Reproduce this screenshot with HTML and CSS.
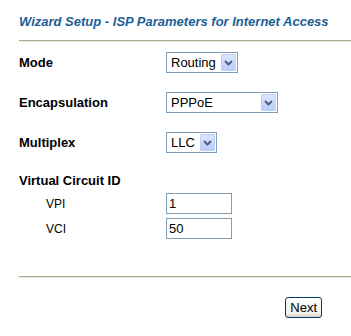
FILE: index.html
```html
<!DOCTYPE html>
<html lang="en">
<head>
    <meta charset="UTF-8">
    <title>Wizard Setup - ISP Parameters for Internet Access</title>
    <link rel="stylesheet" href="styles.css">
</head>
<body>
    <div class="wizard">
        <h1 class="wizard-title">Wizard Setup - ISP Parameters for Internet Access</h1>
        <div class="rule"></div>

        <!-- Connection settings -->
        <div class="field field-first">
            <span class="field-label">Mode</span>
            <span class="select select-mode">
                <span class="select-text">Routing</span>
                <span class="select-btn"><svg width="9" height="6" viewBox="0 0 9 6"><path d="M1 1 L4.5 4.5 L8 1" fill="none" stroke="#4d6185" stroke-width="2"/></svg></span>
            </span>
        </div>
        <div class="field">
            <span class="field-label">Encapsulation</span>
            <span class="select select-encap">
                <span class="select-text">PPPoE</span>
                <span class="select-btn"><svg width="9" height="6" viewBox="0 0 9 6"><path d="M1 1 L4.5 4.5 L8 1" fill="none" stroke="#4d6185" stroke-width="2"/></svg></span>
            </span>
        </div>
        <div class="field">
            <span class="field-label">Multiplex</span>
            <span class="select select-mux">
                <span class="select-text">LLC</span>
                <span class="select-btn"><svg width="9" height="6" viewBox="0 0 9 6"><path d="M1 1 L4.5 4.5 L8 1" fill="none" stroke="#4d6185" stroke-width="2"/></svg></span>
            </span>
        </div>

        <!-- Virtual circuit -->
        <div class="group-label">Virtual Circuit ID</div>
        <div class="sub-field">
            <span class="sub-label">VPI</span>
            <input class="text-input" type="text" value="1">
        </div>
        <div class="sub-field">
            <span class="sub-label">VCI</span>
            <input class="text-input" type="text" value="50">
        </div>

        <div class="rule rule-bottom"></div>
        <div class="actions">
            <button class="btn" type="button">Next</button>
        </div>
    </div>
</body>
</html>
```

FILE: styles.css
```css
body {
    margin: 0;
    background: #fff;
    font-family: "Liberation Sans", Arial, sans-serif;
    color: #000;
}

.wizard {
    padding: 14px 0 0 19px;
}

/* Page heading */
.wizard-title {
    margin: 0;
    font-size: 13px;
    line-height: 16px;
    font-weight: bold;
    font-style: italic;
    color: #1d5f95;
}

/* Separator lines */
.rule {
    margin-top: 10px;
    height: 1px;
    background: #aca899;
    border-bottom: 1px solid #ece9d8;
}

.rule-bottom {
    margin-top: 37px;
}

/* Label + control rows */
.field {
    display: flex;
    align-items: center;
    height: 21px;
    margin-top: 19px;
}

.field-first {
    margin-top: 10px;
}

.field-label {
    width: 147px;
    font-size: 13px;
    font-weight: bold;
}

/* XP style drop-down */
.select {
    display: flex;
    align-items: center;
    box-sizing: border-box;
    height: 21px;
    padding: 1px;
    border: 1px solid #7f9db9;
    font-size: 13px;
}

.select-mode { width: 72px; }
.select-encap { width: 112px; }
.select-mux { width: 51px; }

.select-text {
    flex: 1;
    padding-left: 3px;
}

.select-btn {
    display: flex;
    align-items: center;
    justify-content: center;
    width: 15px;
    height: 17px;
    box-sizing: border-box;
    border: 1px solid #bccff5;
    border-radius: 1px;
    background: linear-gradient(#dbe6fd, #b9cdf8);
}

.group-label {
    margin-top: 19px;
    font-size: 13px;
    line-height: 18px;
    font-weight: bold;
}

.sub-field {
    display: flex;
    align-items: center;
    margin-top: 3px;
}

.sub-field + .sub-field {
    margin-top: 4px;
}

.sub-label {
    width: 120px;
    padding-left: 27px;
    font-size: 12px;
}

.text-input {
    box-sizing: border-box;
    width: 66px;
    height: 21px;
    margin: 0;
    padding: 1px 2px;
    border: 1px solid #7f9db9;
    font-family: inherit;
    font-size: 13px;
    outline: none;
}

/* Bottom action */
.actions {
    display: flex;
    justify-content: flex-end;
    padding: 19px 29px 0 0;
}

.btn {
    box-sizing: border-box;
    height: 21px;
    padding: 0 4px;
    border: 1px solid #003c74;
    border-radius: 3px;
    background: linear-gradient(#ffffff, #f0efe8 80%, #d6d0c5);
    font-family: inherit;
    font-size: 13px;
    color: #000;
}
```
